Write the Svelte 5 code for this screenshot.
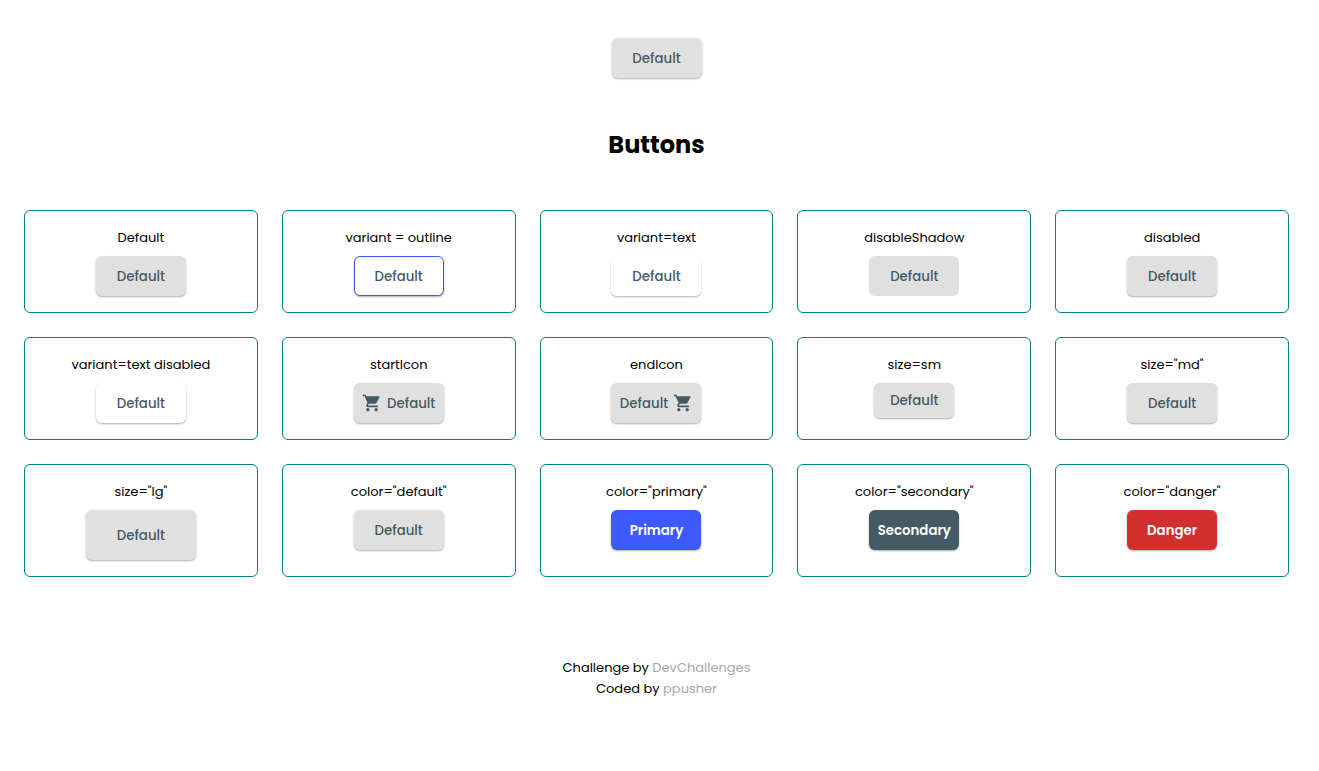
<script>
  const samples = [
    { label: 'Default', text: 'Default' },
    { label: 'variant = outline', text: 'Default', look: 'outline' },
    { label: 'variant=text', text: 'Default', look: 'text' },
    { label: 'disableShadow', text: 'Default', look: 'flat' },
    { label: 'disabled', text: 'Default', disabled: true },
    { label: 'variant=text disabled', text: 'Default', look: 'text', disabled: true },
    { label: 'startIcon', text: 'Default', start: true },
    { label: 'endIcon', text: 'Default', end: true },
    { label: 'size=sm', text: 'Default', look: 'sm' },
    { label: 'size="md"', text: 'Default' },
    { label: 'size="lg"', text: 'Default', look: 'lg' },
    { label: 'color="default"', text: 'Default' },
    { label: 'color="primary"', text: 'Primary', look: 'solid primary' },
    { label: 'color="secondary"', text: 'Secondary', look: 'solid secondary' },
    { label: 'color="danger"', text: 'Danger', look: 'solid danger' }
  ];
</script>

{#snippet cart()}
  <svg viewBox="0 0 24 24" aria-hidden="true">
    <path d="M7 18c-1.1 0-1.99.9-1.99 2S5.9 22 7 22s2-.9 2-2-.9-2-2-2zM1 2v2h2l3.6 7.59-1.35 2.45c-.16.28-.25.61-.25.96 0 1.1.9 2 2 2h12v-2H7.42c-.14 0-.25-.11-.25-.25l.03-.12.9-1.63h7.45c.75 0 1.41-.41 1.75-1.03l3.58-6.49c.08-.14.12-.31.12-.48 0-.55-.45-1-1-1H5.21l-.94-2H1zm16 16c-1.1 0-1.99.9-1.99 2s.89 2 1.99 2 2-.9 2-2-.9-2-2-2z" />
  </svg>
{/snippet}

<div class="page">
  <header>
    <button class="btn" type="button">Default</button>
    <h1>Buttons</h1>
  </header>

  <main>
    {#each samples as s, i}
      <section class="card">
        <p id="sample-{i}">{s.label}</p>
        <button class="btn {s.look ?? ''}" type="button" disabled={s.disabled} aria-describedby="sample-{i}">
          {#if s.start}{@render cart()}{/if}
          <span>{s.text}</span>
          {#if s.end}{@render cart()}{/if}
        </button>
      </section>
    {/each}
  </main>

  <footer>
    <p>Challenge by <a href="#devchallenges">DevChallenges</a></p>
    <p>Coded by <a href="#ppusher">ppusher</a></p>
  </footer>
</div>

<style>
  :global(body) {
    margin: 0;
    background: #fff;
  }

  .page {
    padding: 38px 30px 72px 24px;
    color: #000;
    font-family: Poppins, Inter, sans-serif;
    font-size: 13px;
    line-height: 21px;
  }

  header {
    display: flex;
    flex-direction: column;
    align-items: center;
    gap: 48px;
    margin-bottom: 46px;
  }

  h1 {
    margin: 0;
    font-size: 24px;
    font-weight: 700;
    line-height: 38px;
  }

  main {
    display: grid;
    grid-template-columns: repeat(5, minmax(0, 1fr));
    gap: 24px;
  }

  .card {
    display: flex;
    flex-direction: column;
    align-items: center;
    gap: 8px;
    padding: 16px;
    border: 1px solid #008080;
    border-radius: 6px;
  }

  p {
    margin: 0;
  }

  .btn {
    display: flex;
    align-items: center;
    justify-content: center;
    gap: 5px;
    box-sizing: border-box;
    min-width: 90px;
    height: 40px;
    padding: 0 8px;
    border: 0;
    border-radius: 6px;
    background: #e0e0e0;
    color: #455a64;
    box-shadow: 0 1px 2px rgba(51, 51, 51, 0.4);
    font-family: inherit;
    font-weight: 500;
    line-height: 21px;
    cursor: pointer;
  }

  .btn:disabled {
    cursor: default;
  }

  .btn svg {
    flex: none;
    width: 20px;
    height: 20px;
    fill: currentColor;
  }

  .outline {
    border: 1px solid #3d5afe;
    background: #fff;
  }

  .text {
    background: #fff;
  }

  .btn.flat {
    box-shadow: none;
  }

  .sm {
    min-width: 80px;
    height: 35px;
  }

  .lg {
    min-width: 110px;
    height: 50px;
  }

  .solid {
    color: #fff;
    font-weight: 600;
  }

  .primary {
    background: #3d5afe;
  }

  .secondary {
    background: #455a64;
  }

  .danger {
    background: #d32f2f;
  }

  footer {
    margin-top: 80px;
    text-align: center;
  }

  footer a {
    color: #a9a9a9;
    text-decoration: none;
  }
</style>
